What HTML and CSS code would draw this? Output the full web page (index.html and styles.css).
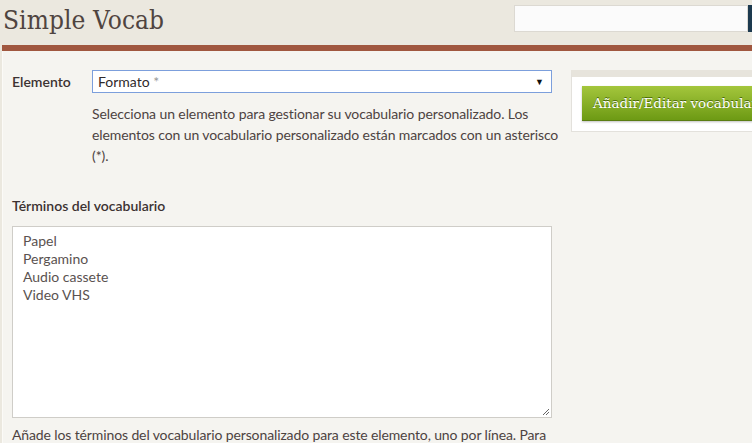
FILE: index.html
```html
<!DOCTYPE html>
<html lang="es">
<head>
<meta charset="utf-8">
<title>Simple Vocab</title>
<link rel="stylesheet" href="styles.css">
</head>
<body>
<header class="top">
  <h1 class="title">Simple Vocab</h1>
  <form class="search">
    <input class="search-input" type="text">
    <button class="search-btn" type="button"></button>
  </form>
</header>
<div class="bar"></div>
<main class="content">
  <section class="form-col">
    <div class="field-row">
      <label class="label">Elemento</label>
      <div class="field">
        <div class="select">
          <span class="select-text">Formato <span class="star">*</span></span>
          <span class="arrow">▼</span>
        </div>
        <p class="help">Selecciona un elemento para gestionar su vocabulario personalizado. Los elementos con un vocabulario personalizado están marcados con un asterisco (*).</p>
      </div>
    </div>
    <div class="terms">
      <label class="label">Términos del vocabulario</label>
      <div class="textarea">
        <div>Papel</div>
        <div>Pergamino</div>
        <div>Audio cassete</div>
        <div>Video VHS</div>
        <svg class="grip" width="9" height="9" viewBox="0 0 9 9"><path d="M8 2 L2 8 M8 5 L5 8" stroke="#666" stroke-width="1"/></svg>
      </div>
      <p class="help2">Añade los términos del vocabulario personalizado para este elemento, uno por línea. Para</p>
    </div>
  </section>
  <aside class="side">
    <div class="panel">
      <button class="save" type="button">Añadir/Editar vocabulario</button>
    </div>
  </aside>
</main>
</body>
</html>
```

FILE: styles.css
```css
html, body {
  margin: 0;
  padding: 0;
}
body {
  width: 752px;
  height: 443px;
  overflow: hidden;
  background: #ebe8df;
  font-family: "Lato", "Open Sans", sans-serif;
  color: #4a4140;
}
.top {
  height: 45px;
  display: flex;
  justify-content: space-between;
  align-items: flex-start;
}
.title {
  margin: 3px 0 0 3px;
  font-family: "DejaVu Serif Condensed", "DejaVu Serif", serif;
  font-stretch: condensed;
  font-weight: normal;
  font-size: 26px;
  letter-spacing: 0.1px;
  color: #4f4440;
  line-height: 34px;
}
.search {
  display: flex;
  margin-top: 5px;
  margin-right: -6px;
}
.search-input {
  width: 234px;
  height: 27px;
  box-sizing: border-box;
  border: 1px solid #dcd9d2;
  background: #fbfbfb;
  margin: 0;
  padding: 0;
}
.search-btn {
  width: 10px;
  height: 27px;
  border: 0;
  margin: 0;
  padding: 0;
  background: #1d3a4f;
}
.bar {
  height: 6px;
  background: #a0573f;
  margin-left: 2px;
}
.content {
  margin-left: 2px;
  border-left: 1px solid #fbfaf7;
  background: #f5f4f0;
  height: 392px;
  display: flex;
  gap: 19px;
  padding: 19px 0 0 9px;
  box-sizing: border-box;
}
.form-col {
  width: 540px;
  flex: none;
}
.field-row {
  display: flex;
}
.label {
  display: block;
  width: 80px;
  flex: none;
  font-size: 14px;
  font-weight: 600;
  color: #3c3232;
  line-height: 22px;
  padding-top: 1px;
}
.field {
  flex: 1;
}
.select {
  height: 23px;
  box-sizing: border-box;
  border: 1px solid #7c9fdc;
  background: #fff;
  display: flex;
  align-items: center;
  justify-content: space-between;
  padding: 0 7px 0 5px;
  font-size: 14px;
  color: #2f2a2a;
}
.star {
  color: #999;
}
.arrow {
  font-size: 9px;
  color: #111;
}
.help {
  margin: 10px -16px 0 0;
  font-size: 14px;
  letter-spacing: -0.1px;
  line-height: 21px;
  color: #4d4342;
}
.terms {
  margin-top: 29px;
}
.terms .label {
  width: auto;
  padding: 0;
}
.textarea {
  position: relative;
  margin-top: 9px;
  height: 192px;
  box-sizing: border-box;
  border: 1px solid #cfcdc8;
  background: #fff;
  padding: 5px 10px;
  font-size: 14px;
  line-height: 18px;
  color: #5a5250;
}
.grip {
  position: absolute;
  right: 1px;
  bottom: 1px;
}
.help2 {
  margin: 6px 0 0 0;
  font-size: 14px;
  letter-spacing: -0.12px;
  line-height: 21px;
  color: #4d4342;
  white-space: nowrap;
}
.side {
  flex: none;
  width: 200px;
}
.panel {
  background: #fff;
  border-top: 7px solid #e7e4dc;
  border-left: 1px solid #e3e1dc;
  border-bottom: 1px solid #e3e1dc;
  height: 45px;
  box-sizing: content-box;
  padding: 9px 0 0 10px;
}
.save {
  width: 200px;
  height: 35px;
  border: 0;
  border-bottom: 1px solid #5a7d12;
  background: linear-gradient(#a4c63c, #6d9a14);
  box-shadow: 0 1px 2px rgba(0,0,0,0.25);
  color: #fff;
  font-family: "DejaVu Serif", serif;
  font-size: 13.5px;
  text-align: left;
  padding: 0 0 0 11px;
  white-space: nowrap;
  overflow: hidden;
  text-shadow: 0 -1px 0 #4b6a0a;
}
```
